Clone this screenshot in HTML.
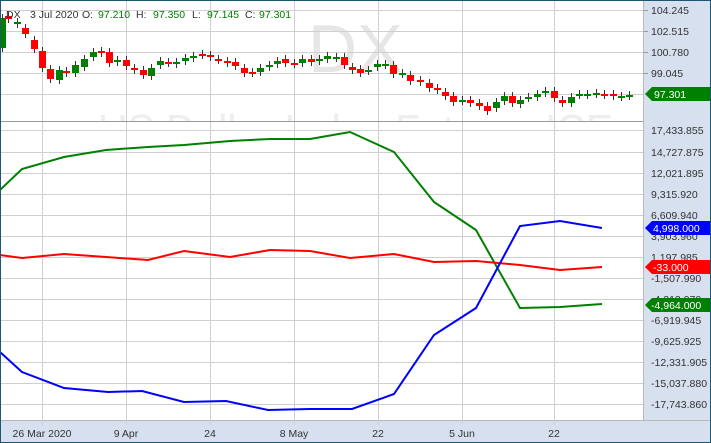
<!DOCTYPE html>
<html><head><meta charset="utf-8"><style>
html,body{margin:0;padding:0;width:711px;height:443px;overflow:hidden;background:#fff}
svg{display:block;font-family:"Liberation Sans",sans-serif}
</style></head><body>
<svg width="711" height="443" xmlns="http://www.w3.org/2000/svg">
<defs><clipPath id="tp"><rect x="0" y="0" width="643" height="121"/></clipPath></defs>
<rect x="0" y="0" width="711" height="443" fill="#fff"/>
<rect x="643" y="0" width="68" height="443" fill="#d6e0ee"/>
<rect x="0" y="420" width="711" height="23" fill="#d6e0ee"/>
<line x1="643.5" y1="0" x2="643.5" y2="420" stroke="#b8b8b8"/>
<line x1="0" y1="420.5" x2="711" y2="420.5" stroke="#b8b8b8"/>
<!-- watermark -->
<g clip-path="url(#tp)">
<text x="308" y="72" font-size="68" fill="#e6e6e6">DX</text>
<text x="98" y="145" font-size="44" fill="#eeeeee" textLength="515" lengthAdjust="spacingAndGlyphs">US Dollar Index Futures ICE</text>
</g>
<g stroke="#cfcfcf" stroke-width="1">
<line x1="0" y1="10.5" x2="643" y2="10.5"/><line x1="0" y1="31.5" x2="643" y2="31.5"/>
<line x1="0" y1="52.5" x2="643" y2="52.5"/><line x1="0" y1="73.5" x2="643" y2="73.5"/>
<line x1="0" y1="94.5" x2="643" y2="94.5"/>
<line x1="0" y1="130.5" x2="643" y2="130.5"/><line x1="0" y1="152.5" x2="643" y2="152.5"/>
<line x1="0" y1="173.5" x2="643" y2="173.5"/><line x1="0" y1="194.5" x2="643" y2="194.5"/>
<line x1="0" y1="215.5" x2="643" y2="215.5"/><line x1="0" y1="236.5" x2="643" y2="236.5"/>
<line x1="0" y1="257.5" x2="643" y2="257.5"/><line x1="0" y1="278.5" x2="643" y2="278.5"/>
<line x1="0" y1="299.5" x2="643" y2="299.5"/><line x1="0" y1="320.5" x2="643" y2="320.5"/>
<line x1="0" y1="341.5" x2="643" y2="341.5"/><line x1="0" y1="362.5" x2="643" y2="362.5"/>
<line x1="0" y1="383.5" x2="643" y2="383.5"/><line x1="0" y1="404.5" x2="643" y2="404.5"/>
<line x1="42.5" y1="0" x2="42.5" y2="425"/><line x1="126.5" y1="0" x2="126.5" y2="425"/>
<line x1="210.5" y1="0" x2="210.5" y2="425"/><line x1="294.5" y1="0" x2="294.5" y2="425"/>
<line x1="378.5" y1="0" x2="378.5" y2="425"/><line x1="462.5" y1="0" x2="462.5" y2="425"/>
<line x1="554.5" y1="0" x2="554.5" y2="425"/>
</g>
<line x1="0" y1="121.5" x2="643" y2="121.5" stroke="#9a9a9a"/>
<g id="candles"></g>
<polyline fill="none" stroke="#008000" stroke-width="2" points="0,190 22,169 64,157 106,150 148,147 184,145 230,141 270,139 310,139 350,132 394,152 434,202 476,230 520,308 560,307 602,304"/>
<polyline fill="none" stroke="#ff0000" stroke-width="2" points="0,255 22,258 64,254 106,257 148,260 184,251 230,257 270,250 310,251 350,258 394,254 434,262 476,261 520,265 560,270 602,267"/>
<polyline fill="none" stroke="#0000ff" stroke-width="2" points="0,352 22,372 64,388 108,392 142,391 184,402 226,401 268,410 310,409 352,409 394,394 434,335 476,308 520,226 560,221 602,228"/>
<g font-size="10.5" fill="#333">
<text x="6" y="18">DX</text><text x="30" y="18">3 Jul 2020</text>
<text x="82" y="18">O:</text><text x="98" y="18" fill="#008000">97.210</text>
<text x="136" y="18">H:</text><text x="153" y="18" fill="#008000">97.350</text>
<text x="192" y="18">L:</text><text x="207" y="18" fill="#008000">97.145</text>
<text x="245" y="18">C:</text><text x="259" y="18" fill="#008000">97.301</text>
</g>
<g font-size="10.5" fill="#333">
<g stroke="#999"><line x1="644" y1="10.5" x2="648" y2="10.5"/><line x1="644" y1="31.5" x2="648" y2="31.5"/><line x1="644" y1="52.5" x2="648" y2="52.5"/><line x1="644" y1="73.5" x2="648" y2="73.5"/></g>
<text x="651" y="14">104.245</text><text x="651" y="35">102.515</text>
<text x="651" y="56">100.780</text><text x="651" y="77">99.045</text>
<text x="651" y="134">17,433.855</text><text x="651" y="156">14,727.875</text>
<text x="651" y="177">12,021.895</text><text x="651" y="198">9,315.920</text>
<text x="651" y="219">6,609.940</text><text x="651" y="240">3,903.960</text>
<text x="651" y="261">1,197.985</text><text x="651" y="282">-1,507.990</text>
<text x="651" y="303">-4,213.970</text><text x="651" y="324">-6,919.945</text>
<text x="651" y="345">-9,625.925</text><text x="651" y="366">-12,331.905</text>
<text x="651" y="387">-15,037.880</text><text x="651" y="408">-17,743.860</text>
</g>
<g font-size="10.5" fill="#fff">
<polygon points="645,94 652,87 711,87 711,101 652,101" fill="#008000"/><text x="654" y="98">97.301</text>
<polygon points="645,228 652,221 711,221 711,235 652,235" fill="#0000ff"/><text x="653" y="232">4,998.000</text>
<polygon points="645,267 652,260 711,260 711,274 652,274" fill="#ff0000"/><text x="653" y="271">-33.000</text>
<polygon points="645,305 652,298 711,298 711,312 652,312" fill="#008000"/><text x="651" y="309">-4,964.000</text>
</g>
<g font-size="10.5" fill="#333" text-anchor="middle">
<text x="42" y="437">26 Mar 2020</text><text x="126" y="437">9 Apr</text>
<text x="210" y="437">24</text><text x="294" y="437">8 May</text>
<text x="378" y="437">22</text><text x="462" y="437">5 Jun</text>
<text x="554" y="437">22</text>
</g>
<rect x="0.5" y="0.5" width="710" height="442" fill="none" stroke="#1d5670"/>
</svg>
<script>
var d=[[2,18,48,'g'],[8,16,19,'r'],[17,22,24,'g'],[25,28,34,'r'],[34,40,49,'r'],[42,51,68,'r'],[50,69,79,'r'],[59,70,80,'g'],[66,71,73,'r'],[75,65,73,'g'],[84,59,67,'g'],[93,52,57,'g'],[101,51,53,'r'],[109,52,63,'r'],[117,60,62,'g'],[126,60,66,'r'],[134,68,70,'r'],[143,70,75,'r'],[151,68,76,'g'],[160,61,65,'g'],[168,62,63,'r'],[176,62,64,'g'],[185,58,61,'g'],[193,56,58,'g'],[202,54,55,'r'],[210,55,57,'r'],[218,59,60,'r'],[227,61,63,'r'],[235,62,66,'r'],[244,68,73,'r'],[252,72,73,'r'],[260,68,72,'g'],[269,65,67,'g'],[277,61,64,'g'],[285,59,63,'r'],[294,63,64,'r'],[302,59,63,'g'],[311,59,62,'r'],[319,59,61,'g'],[327,56,59,'g'],[336,57,58,'g'],[344,57,65,'r'],[352,67,70,'r'],[360,69,73,'r'],[368,70,71,'g'],[377,64,67,'g'],[385,64,65,'g'],[393,65,74,'r'],[402,73,74,'g'],[410,75,81,'r'],[420,80,82,'r'],[429,83,88,'r'],[437,88,90,'r'],[445,92,96,'r'],[453,96,102,'r'],[462,100,101,'g'],[470,100,103,'r'],[479,103,106,'r'],[487,106,111,'r'],[496,102,108,'g'],[504,96,101,'g'],[512,96,103,'r'],[520,100,104,'g'],[528,97,98,'g'],[537,94,97,'g'],[545,91,93,'g'],[554,91,98,'r'],[562,100,103,'r'],[571,97,103,'g'],[579,94,95,'g'],[587,94,95,'g'],[596,93,94,'g'],[604,94,95,'r'],[613,94,96,'r'],[621,96,97,'g'],[629,95,96,'g']];
var s='';d.forEach(function(c){var col=c[3]=='g'?'#008000':'#ff0000';
s+='<line x1="'+(c[0]+.5)+'" y1="'+(c[1]-4)+'" x2="'+(c[0]+.5)+'" y2="'+(c[2]+4)+'" stroke="#333"/>';
s+='<rect x="'+(c[0]-3)+'" y="'+c[1]+'" width="7" height="'+Math.max(2,c[2]-c[1])+'" fill="'+col+'"/>';});
document.getElementById('candles').innerHTML=s;
</script>
</body></html>
